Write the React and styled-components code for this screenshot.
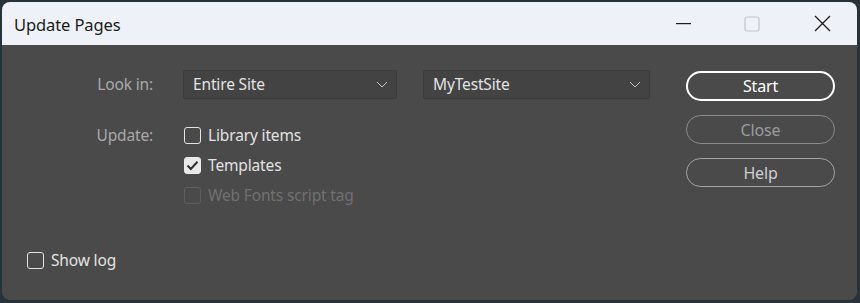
import React from "react";
import styled, { createGlobalStyle } from "styled-components";

const Global = createGlobalStyle`
  html, body { margin: 0; padding: 0; background: #27323a; }
  body { font-family: "Noto Sans", "Liberation Sans", sans-serif; }
  #root { padding: 2px 3px 3px 2px; }
`;

const Window = styled.div`
  width: 855px;
  height: 298px;
  border-radius: 8px;
  overflow: hidden;
  display: flex;
  flex-direction: column;
  background: #4a4a4a;
`;

const TitleBar = styled.div`
  height: 43px;
  flex: none;
  background: #eef2f8;
  display: flex;
  align-items: center;
  padding-left: 12px;
`;

const Title = styled.div`
  font-size: 16.5px;
  color: #1b1b1b;
  flex: 1;
  margin-top: 1px;
  letter-spacing: -0.1px;
`;

const Controls = styled.div`
  display: flex;
  align-items: center;
  height: 100%;
`;

const CtrlBtn = styled.div`
  width: 70px;
  height: 100%;
  display: flex;
  align-items: center;
  justify-content: center;
  margin-left: ${(p) => p.$ml || 0}px;
`;

const Body = styled.div`
  flex: 1;
  display: flex;
  flex-direction: column;
  padding: 24px 0 0 0;
  font-size: 15.5px;
  letter-spacing: -0.15px;
`;

const Top = styled.div`
  display: flex;
  align-items: flex-start;
`;

const Form = styled.div`
  display: grid;
  grid-template-columns: 151px auto;
  column-gap: 30px;
  row-gap: 21px;
  align-items: center;
`;

const Label = styled.div`
  text-align: right;
  color: #a9a9a9;
  align-self: ${(p) => (p.$top ? "start" : "center")};
  line-height: 30px;
`;

const DropRow = styled.div`
  display: flex;
  gap: 26px;
`;

const Select = styled.div`
  width: ${(p) => p.$w}px;
  height: 29px;
  box-sizing: border-box;
  background: #434343;
  border: 1px solid #3c3c3c;
  border-radius: 2px;
  display: flex;
  align-items: center;
  padding: 0 8px 0 9px;
  color: #e2e2e2;
  justify-content: space-between;
`;

const CheckList = styled.div`
  display: flex;
  flex-direction: column;
`;

const CheckRow = styled.label`
  height: 30px;
  display: flex;
  align-items: center;
  gap: 7px;
  margin-left: 1px;
  color: ${(p) => (p.$disabled ? "#707070" : "#e2e2e2")};
`;

const Box = styled.span`
  width: 17px;
  height: 17px;
  box-sizing: border-box;
  border-radius: 3px;
  border: 1.5px solid
    ${(p) => (p.$disabled ? "#5f5f5f" : p.$checked ? "#e9e9e9" : "#e4e4e4")};
  background: ${(p) => (p.$checked ? "#e9e9e9" : "transparent")};
  display: flex;
  align-items: center;
  justify-content: center;
  flex: none;
`;

const Buttons = styled.div`
  margin-left: 36px;
  padding-top: 2px;
  display: flex;
  flex-direction: column;
  gap: 14px;
`;

const Button = styled.div`
  width: 149px;
  height: ${(p) => (p.$primary ? 30 : 29)}px;
  box-sizing: border-box;
  border-radius: 15px;
  border: ${(p) => (p.$primary ? "2.5px solid #ffffff" : `1px solid ${p.$border}`)};
  color: ${(p) => p.$color};
  font-size: 16px;
  display: flex;
  align-items: center;
  justify-content: center;
`;

const Bottom = styled.div`
  margin-top: auto;
  margin-bottom: 25px;
  padding-left: 24px;
`;

const Chevron = () => (
  <svg width="12" height="7" viewBox="0 0 12 7">
    <path d="M1 1 L6 6 L11 1" fill="none" stroke="#c4c4c4" strokeWidth="1" />
  </svg>
);

const Check = ({ checked, disabled, children }) => (
  <CheckRow $disabled={disabled}>
    <Box $checked={checked} $disabled={disabled}>
      {checked && (
        <svg width="13" height="11" viewBox="0 0 13 11">
          <path d="M1.5 5.5 L4.8 9 L11.5 1.8" fill="none" stroke="#2f2f2f" strokeWidth="2" />
        </svg>
      )}
    </Box>
    {children}
  </CheckRow>
);

export default function App() {
  return (
    <>
      <Global />
      <Window>
        <TitleBar>
          <Title>Update Pages</Title>
          <Controls>
            <CtrlBtn>
              <svg width="16" height="2" viewBox="0 0 16 2">
                <rect x="0" y="0" width="15" height="1.2" fill="#1b1b1b" />
              </svg>
            </CtrlBtn>
            <CtrlBtn $ml={-2}>
              <svg width="16" height="16" viewBox="0 0 16 16">
                <rect x="1" y="1" width="14" height="14" rx="2" fill="none" stroke="#c2c4c8" strokeWidth="1.2" />
              </svg>
            </CtrlBtn>
            <CtrlBtn>
              <svg width="17" height="17" viewBox="0 0 17 17">
                <path d="M1 1 L16 16 M16 1 L1 16" stroke="#1b1b1b" strokeWidth="1.3" />
              </svg>
            </CtrlBtn>
          </Controls>
        </TitleBar>
        <Body>
          <Top>
            <Form>
              <Label>Look in:</Label>
              <DropRow>
                <Select $w={214}>
                  Entire Site
                  <Chevron />
                </Select>
                <Select $w={227}>
                  MyTestSite
                  <Chevron />
                </Select>
              </DropRow>
              <Label $top>Update:</Label>
              <CheckList>
                <Check>Library items</Check>
                <Check checked>Templates</Check>
                <Check disabled>Web Fonts script tag</Check>
              </CheckList>
            </Form>
            <Buttons>
              <Button $primary $color="#ffffff">Start</Button>
              <Button $border="#8c8c8c" $color="#9c9c9c">Close</Button>
              <Button $border="#a4a4a4" $color="#cfcfcf">Help</Button>
            </Buttons>
          </Top>
          <Bottom>
            <Check>Show log</Check>
          </Bottom>
        </Body>
      </Window>
    </>
  );
}
